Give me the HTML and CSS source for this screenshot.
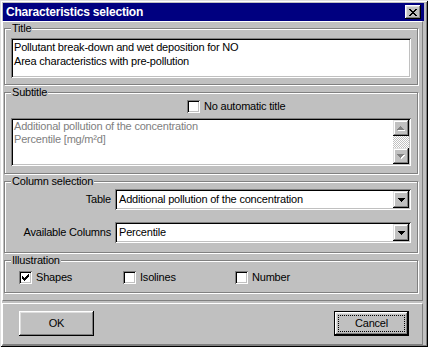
FILE: index.html
```html
<!DOCTYPE html>
<html>
<head>
<meta charset="utf-8">
<title>Characteristics selection</title>
<link rel="stylesheet" href="styles.css">
</head>
<body>
<div class="window">
  <div class="titlebar">
    <span class="title">Characteristics selection</span>
    <span class="close"><svg width="8" height="7" viewBox="0 0 8 7"><path d="M0 0h2v1h-2zM6 0h2v1h-2zM1 1h2v1h-2zM5 1h2v1h-2zM2 2h4v1h-4zM3 3h2v1h-2zM2 4h4v1h-4zM1 5h2v1h-2zM5 5h2v1h-2zM0 6h2v1h-2zM6 6h2v1h-2z" fill="#000"/></svg></span>
  </div>
  <div class="panel">
    <fieldset class="group g-title">
      <legend>Title</legend>
      <div class="field textbox">Pollutant break-down and wet deposition for NO<br>Area characteristics with pre-pollution</div>
    </fieldset>
    <fieldset class="group g-subtitle">
      <legend>Subtitle</legend>
      <div class="auto-row">
        <label class="check"><span class="box"></span><span>No automatic title</span></label>
      </div>
      <div class="field subbox">
        <div class="subtext">Additional pollution of the concentration<br>Percentile [mg/m²d]</div>
        <div class="vscroll">
          <span class="sbtn"><svg width="8" height="5" viewBox="0 0 8 5"><path d="M4 1h1v1h-1zM3 2h3v1h-3zM2 3h5v1h-5zM1 4h7v1h-7z" fill="#fff"/><path d="M3 0h1v1h-1zM2 1h3v1h-3zM1 2h5v1h-5zM0 3h7v1h-7z" fill="#808080"/></svg></span>
          <span class="track"></span>
          <span class="sbtn"><svg width="8" height="5" viewBox="0 0 8 5"><path d="M1 1h7v1h-7zM2 2h5v1h-5zM3 3h3v1h-3zM4 4h1v1h-1z" fill="#fff"/><path d="M0 0h7v1h-7zM1 1h5v1h-5zM2 2h3v1h-3zM3 3h1v1h-1z" fill="#808080"/></svg></span>
        </div>
      </div>
    </fieldset>
    <fieldset class="group g-columns">
      <legend>Column selection</legend>
      <div class="formgrid">
        <span class="lbl">Table</span>
        <div class="field combo"><span class="val">Additional pollution of the concentration</span><span class="dd"><svg width="7" height="4" viewBox="0 0 7 4"><path d="M0 0h7v1h-7zM1 1h5v1h-5zM2 2h3v1h-3zM3 3h1v1h-1z" fill="#000"/></svg></span></div>
        <span class="lbl">Available Columns</span>
        <div class="field combo"><span class="val">Percentile</span><span class="dd"><svg width="7" height="4" viewBox="0 0 7 4"><path d="M0 0h7v1h-7zM1 1h5v1h-5zM2 2h3v1h-3zM3 3h1v1h-1z" fill="#000"/></svg></span></div>
      </div>
    </fieldset>
    <fieldset class="group g-illus">
      <legend>Illustration</legend>
      <div class="checks">
        <label class="check"><span class="box"><svg width="7" height="7" viewBox="0 0 7 7"><path d="M0 2h1v1h1v1h1v-1h1v-1h1v-1h1v-1h1v3h-1v1h-1v1h-1v1h-1v1h-1v-1h-1v-1h-1v-1h-1z" fill="#000"/></svg></span><span>Shapes</span></label>
        <label class="check"><span class="box"></span><span>Isolines</span></label>
        <label class="check"><span class="box"></span><span>Number</span></label>
      </div>
    </fieldset>
  </div>
  <div class="buttons">
    <button class="btn">OK</button>
    <button class="btn default"><span class="focus">Cancel</span></button>
  </div>
</div>
</body>
</html>
```

FILE: styles.css
```css
* { box-sizing: border-box; }
html, body { margin: 0; padding: 0; }
body {
  background: #c0c0c0;
  font-family: "Liberation Sans", Arial, sans-serif;
  font-size: 11px;
  line-height: 13px;
  letter-spacing: -0.2px;
  color: #000;
}
.window {
  width: 428px;
  height: 347px;
  padding: 2px;
  background: #c0c0c0;
  display: flex;
  flex-direction: column;
  box-shadow: inset 1px 1px #dfdfdf, inset -1px -1px #000, inset 2px 2px #fff, inset -2px -2px #808080;
}
.titlebar {
  margin: 1px 2px 0 1px;
  height: 18px;
  background: #000080;
  color: #fff;
  display: flex;
  align-items: center;
  justify-content: space-between;
  padding: 0 3px 0 3px;
}
.title {
  font-weight: bold;
  font-size: 12px;
  line-height: 18px;
  letter-spacing: -0.2px;
}
.close {
  width: 16px;
  height: 14px;
  background: #c0c0c0;
  display: flex;
  align-items: center;
  justify-content: center;
  padding-right: 1px;
  box-shadow: inset -1px -1px #000, inset 1px 1px #fff, inset -2px -2px #808080, inset 2px 2px #dfdfdf;
}
.close svg { display: block; }
.panel {
  margin-right: 3px;
  border-top: 1px solid #fff;
  border-left: 1px solid #fff;
  border-right: 1px solid #808080;
  border-bottom: 1px solid #808080;
  padding: 0 4px 6px 1px;
}
.group {
  margin: 0 0 1px 0;
  min-width: 0;
  border: 1px solid #808080;
  box-shadow: inset 1px 1px #fff, 1px 1px #fff;
  padding: 0 6px;
}
.group legend {
  padding: 0 1px;
  line-height: 13px;
  background: #c0c0c0;
}
.field {
  background: #fff;
  box-shadow: inset 1px 1px #808080, inset -1px -1px #fff, inset 2px 2px #000, inset -2px -2px #c0c0c0;
}
.g-title { padding-top: 3px; padding-bottom: 6px; }
.textbox {
  height: 40px;
  padding: 2px 2px 2px 3px;
  line-height: 14px;
}
.g-subtitle { padding-top: 1px; padding-bottom: 7px; }
.auto-row { padding-left: 176px; height: 13px; display: flex; }
.check {
  display: inline-flex;
  align-items: center;
  gap: 4px;
  height: 13px;
}
.box {
  width: 13px;
  height: 13px;
  background: #fff;
  display: flex;
  align-items: center;
  justify-content: center;
  box-shadow: inset 1px 1px #808080, inset -1px -1px #fff, inset 2px 2px #000, inset -2px -2px #c0c0c0;
}
.box svg { display: block; }
.subbox {
  margin-top: 5px;
  height: 48px;
  padding: 2px;
  display: flex;
}
.subtext {
  flex: 1;
  color: #808080;
  padding: 0 0 0 1px;
  line-height: 13px;
}
.vscroll {
  width: 16px;
  display: flex;
  flex-direction: column;
}
.sbtn {
  height: 16px;
  background: #c0c0c0;
  display: flex;
  align-items: center;
  justify-content: center;
  box-shadow: inset -1px -1px #000, inset 1px 1px #dfdfdf, inset -2px -2px #808080, inset 2px 2px #fff;
}
.sbtn svg { display: block; }
.track {
  flex: 1;
  background: repeating-conic-gradient(#c0c0c0 0 25%, #fff 0 50%) 0 0 / 2px 2px;
}
.g-columns { padding-top: 1px; padding-bottom: 9px; }
.formgrid {
  display: grid;
  grid-template-columns: 100px 1fr;
  column-gap: 4px;
  row-gap: 12px;
  align-items: center;
}
.lbl { text-align: right; }
.combo {
  height: 21px;
  padding: 2px;
  display: flex;
  align-items: stretch;
}
.combo .val {
  flex: 1;
  padding-left: 2px;
  display: flex;
  align-items: center;
}
.dd {
  width: 16px;
  background: #c0c0c0;
  display: flex;
  align-items: center;
  justify-content: center;
  box-shadow: inset -1px -1px #000, inset 1px 1px #dfdfdf, inset -2px -2px #808080, inset 2px 2px #fff;
}
.dd svg { display: block; }
.g-illus { padding-top: 4px; padding-bottom: 8px; }
.checks {
  display: grid;
  grid-template-columns: 104px 112px auto;
  padding-left: 8px;
}
.buttons {
  margin-top: 2px;
  margin-right: 3px;
  border-top: 1px solid #fff;
  border-left: 1px solid #fff;
  border-right: 1px solid #808080;
  border-bottom: 1px solid #808080;
  padding: 7px 13px 8px 16px;
  display: flex;
  justify-content: space-between;
}
.btn {
  width: 75px;
  height: 25px;
  border: 0;
  padding: 0;
  margin: 0;
  font: inherit;
  letter-spacing: inherit;
  color: #000;
  background: #c0c0c0;
  box-shadow: inset -1px -1px #000, inset 1px 1px #fff, inset -2px -2px #808080, inset 2px 2px #dfdfdf;
}
.btn.default {
  padding: 4px;
  box-shadow: inset 0 0 0 1px #000, inset -2px -2px #000, inset 2px 2px #fff, inset -3px -3px #808080, inset 3px 3px #dfdfdf;
}
.focus {
  display: flex;
  align-items: center;
  justify-content: center;
  height: 100%;
  border: 1px dotted #000;
}
```
